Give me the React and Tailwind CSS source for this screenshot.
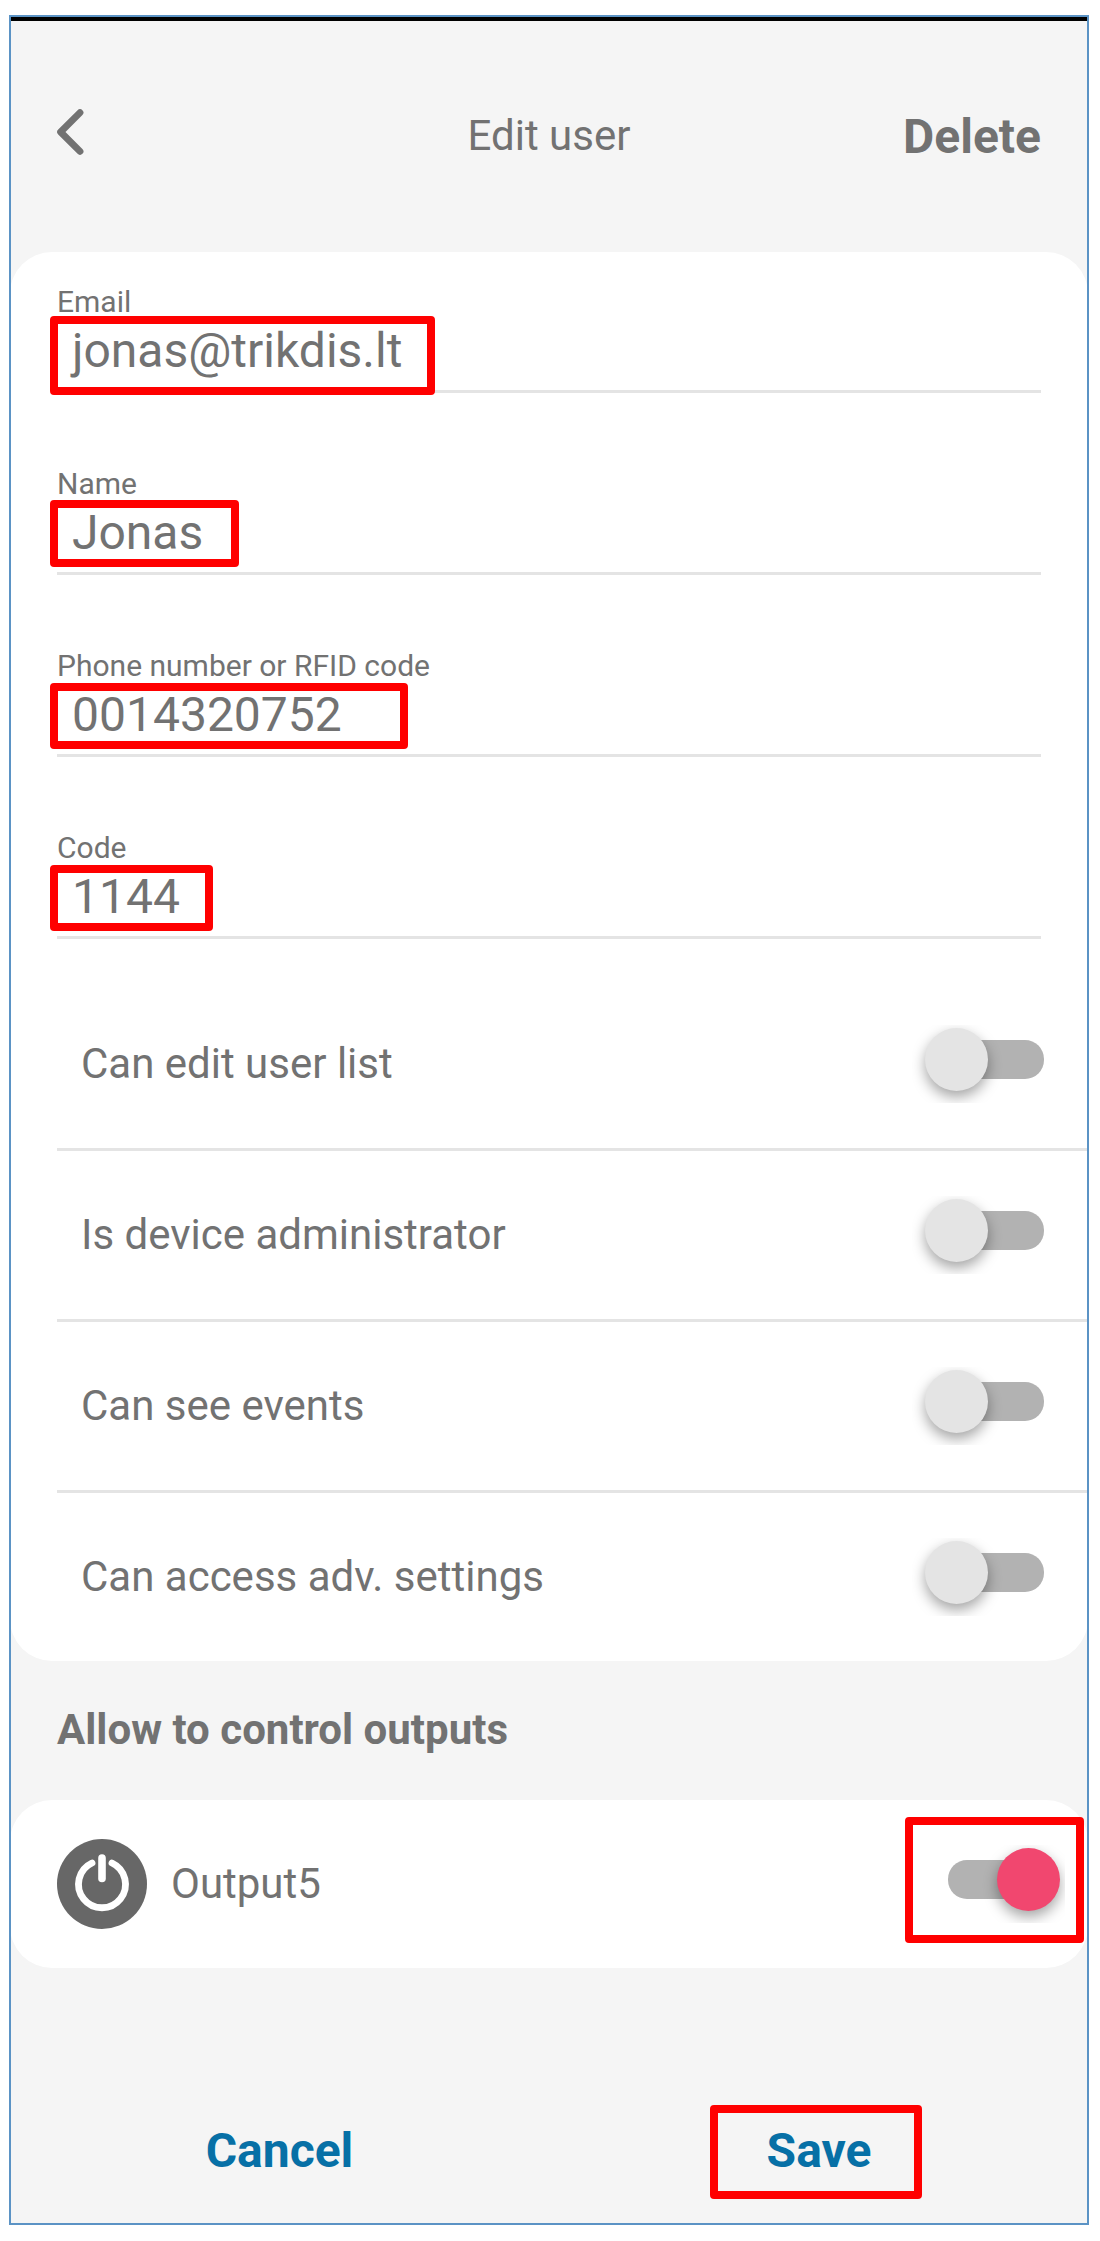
const fields = [
  { label: 'Email', value: 'jonas@trikdis.lt', box: 'left-[-22px] top-[-7px] h-[79px] w-[385px]' },
  { label: 'Name', value: 'Jonas', box: 'left-[-22px] top-[-5px] h-[67px] w-[189px]' },
  { label: 'Phone number or RFID code', value: '0014320752', box: 'left-[-22px] top-[-4px] h-[66px] w-[358px]' },
  { label: 'Code', value: '1144', box: 'left-[-22px] top-[-4px] h-[66px] w-[163px]' },
];

const permissions = [
  'Can edit user list',
  'Is device administrator',
  'Can see events',
  'Can access adv. settings',
];

// Red rounded frame laid over the element it marks
function Highlight({ className }) {
  return <span className={`pointer-events-none absolute rounded-[4px] border-8 border-[#ff0000] ${className}`} />;
}

function Field({ label, value, box, first }) {
  return (
    <div className={first ? '' : 'mt-[41px]'}>
      <div className="ml-[47px] mr-[47px] border-b-[3px] border-[#e4e4e4] pt-[30px] pb-[11px]">
        <div className="h-[41px] text-[30px] leading-10">{label}</div>
        <div className="relative ml-[15px] h-14 text-[48px] leading-[56px]">
          {value}
          <Highlight className={box} />
        </div>
      </div>
    </div>
  );
}

function Toggle({ on }) {
  return (
    <span className="relative block h-[78px] w-[153px] shrink-0 overflow-hidden">
      <span className="absolute left-[36px] top-[15px] h-[39px] w-[96px] rounded-[19px] bg-[#b2b2b2]" />
      <span
        className={
          on
            ? 'absolute left-[85px] top-[3px] size-[63px] rounded-full bg-[#f1476f] shadow-[0_6px_14px_rgba(0,0,0,0.36)]'
            : 'absolute left-[13px] top-[3px] size-[63px] rounded-full bg-[#e4e4e4] shadow-[0_6px_14px_rgba(0,0,0,0.36)]'
        }
      />
    </span>
  );
}

export default function App() {
  return (
    <div className="h-[2241px] w-[1100px] bg-white pl-[9px] pt-[15px] font-['Roboto',sans-serif] text-[#727272]">
      <main className="flex h-[2210px] w-[1080px] flex-col overflow-hidden border-2 border-[#5b93c5] bg-[#f5f5f5]">
        <div className="h-1 shrink-0 bg-black" />
        <header className="grid h-[231px] shrink-0 grid-cols-3 items-center px-[46px]">
          <svg className="mb-[10px] h-[46px] w-[28px]" viewBox="0 0 28 46" fill="none" stroke="currentColor" strokeWidth="6.8" strokeLinecap="round" strokeLinejoin="round">
            <path d="M23 3.6 L3.6 23 L23 42.4" />
          </svg>
          <h1 className="pb-[2px] text-center text-[42px] leading-[50px]">Edit user</h1>
          <button className="text-right text-[48px] font-bold leading-[56px]">Delete</button>
        </header>

        <section className="-mx-px h-[1409px] shrink-0 rounded-[42px] bg-white">
          {fields.map((f, i) => (
            <Field key={f.label} {...f} first={i === 0} />
          ))}
          <div className="ml-[47px] mt-[41px]">
            {permissions.map((p, i) => (
              <div
                key={p}
                className={`flex items-center justify-between pl-[24px] pr-[23px] ${i < 3 ? 'h-[171px] border-b-[3px] border-[#e4e4e4]' : 'h-[168px]'}`}
              >
                <span className="text-[42px] leading-[50px]">{p}</span>
                <Toggle />
              </div>
            ))}
          </div>
        </section>

        <h2 className="flex h-[139px] shrink-0 items-center pb-[2px] pl-[46px] text-[42px] font-bold leading-[50px]">
          Allow to control outputs
        </h2>

        <section className="-mx-px flex h-[168px] shrink-0 items-center rounded-[42px] bg-white pl-[47px] pr-[23px]">
          <svg className="size-[90px]" viewBox="0 0 90 90" fill="none">
            <circle cx="45" cy="45" r="45" fill="#676767" />
            <path d="M35 24 A23.5 23.5 0 1 0 55 24" stroke="#fff" strokeWidth="6.8" strokeLinecap="round" />
            <path d="M45 19 V39.5" stroke="#fff" strokeWidth="7.6" strokeLinecap="round" />
          </svg>
          <span className="ml-[24px] text-[42px] leading-[50px]">Output5</span>
          <div className="relative ml-auto">
            <Toggle on />
            <Highlight className="left-[-7px] top-[-28px] h-[126px] w-[179px]" />
          </div>
        </section>

        <footer className="grid grid-cols-2 items-start pt-[137px] text-[48px] font-bold text-[#0770a6]">
          <button className="pr-[1px] text-center leading-[92px]">Cancel</button>
          <div className="relative h-[94px] pl-[2px] text-center leading-[92px]">
            <button>Save</button>
            <Highlight className="left-[161px] top-0 h-[94px] w-[212px]" />
          </div>
        </footer>
      </main>
    </div>
  );
}
